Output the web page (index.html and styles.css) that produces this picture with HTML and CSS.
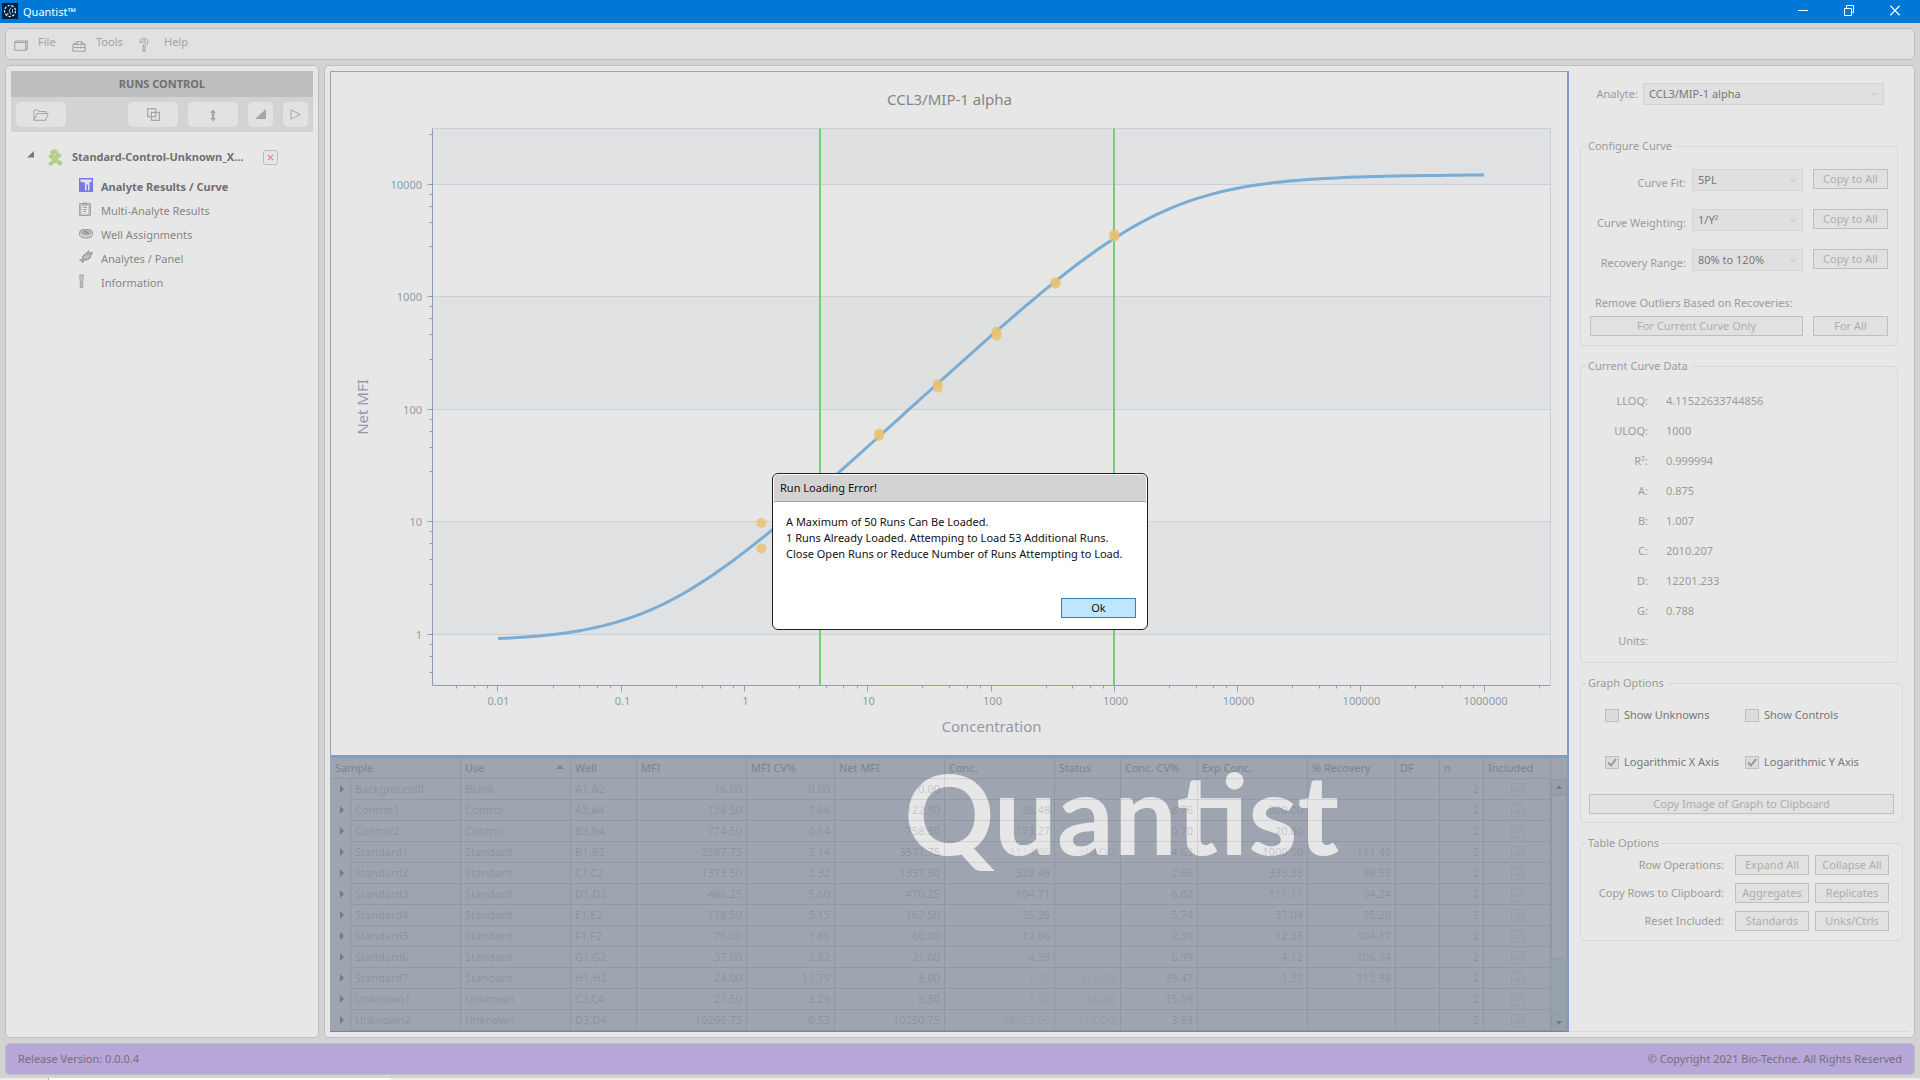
FILE: index.html
```html
<!DOCTYPE html>
<html lang="en">
<head>
<meta charset="utf-8">
<title>Quantist</title>
<link rel="stylesheet" href="styles.css">
</head>
<body>
<header class="titlebar">
  <svg class="app-icon" width="16" height="16" viewBox="0 0 16 16" aria-hidden="true">
    <rect width="16" height="16" fill="#04203f"/>
    <circle cx="8" cy="8" r="5.500" fill="none" stroke="#e8f4fa" stroke-width="1.200" stroke-dasharray="2.400 1.400"/>
    <path d="M9 4.500L7 8l2 3.500M10.500 6v4" fill="none" stroke="#7fc4e8" stroke-width="1"/>
    <circle cx="5.500" cy="11" r="1" fill="#8bc34a"/>
  </svg>
  <span class="app-name">Quantist™</span>
  <div class="window-buttons">
    <button type="button" aria-label="Minimize"><svg width="10" height="11" viewBox="0 0 10 11"><path d="M0 5.500h10" stroke="#fff"/></svg></button>
    <button type="button" aria-label="Restore"><svg width="10" height="11" viewBox="0 0 10 11"><path d="M.5 3.500h7v7h-7zM2.500 3.500v-3h7v7h-2" fill="none" stroke="#fff"/></svg></button>
    <button type="button" aria-label="Close"><svg width="10" height="11" viewBox="0 0 10 11"><path d="M.3.6l9.400 9.800M9.700.6L.3 10.400" stroke="#fff" stroke-width="1.200"/></svg></button>
  </div>
</header>

<div class="app">
  <nav class="menubar panel">
    <button type="button" class="menu-item">
      <svg width="14" height="14" viewBox="0 0 14 14"><path d="M.7 4.500v7.800h11V4.500zM.7 4.500l1-1.500h4.500M11.700 12.300l1.600-1V3l-1.600 1.500M6 3h7.300" fill="none" stroke="#a3a3a3" stroke-width="1.100"/></svg>
      <span>File</span>
    </button>
    <button type="button" class="menu-item">
      <svg width="14" height="14" viewBox="0 0 14 14"><path d="M1 6.500h12v6.700H1zM1 9.500h12M5 6.300V3.500h4.500v2.800M2.500 6V5h1.800M10 5h1.500v1M5.500 8.500v2M8.500 8.500v2" fill="none" stroke="#a3a3a3" stroke-width="1.100"/></svg>
      <span>Tools</span>
    </button>
    <button type="button" class="menu-item">
      <svg width="14" height="14" viewBox="0 0 14 14"><path d="M2 4.500C2 1.800 3.600.6 5.800.6s4 1.400 4 3.400c0 2.600-2.600 2.700-2.600 5.200H5c0-3.400 2.400-3.300 2.400-5 0-.8-.6-1.400-1.500-1.400S4.300 3.400 4.300 4.500zM5 11h2.200v2.300H5z" fill="none" stroke="#9c9c9c"/></svg>
      <span>Help</span>
    </button>
  </nav>

  <main class="workspace">
    <aside class="runs panel">
      <h2 class="runs-title">RUNS CONTROL</h2>
      <div class="runs-tools">
        <button type="button" class="tool open" aria-label="Open"><svg width="16" height="12" viewBox="0 0 16 12"><path d="M1 11.300V1h4l1 1.500h7v2M1 11.300l3-6.800h11.200l-2.700 6.800z" fill="none" stroke="#a6a6a6"/></svg></button>
        <button type="button" class="tool" aria-label="Copy"><svg width="13" height="13" viewBox="0 0 13 13"><path d="M.6.6h8v8h-8zM4.400 4.400h8v8h-8z" fill="none" stroke="#a6a6a6" stroke-width="1.200"/></svg></button>
        <button type="button" class="tool" aria-label="Sort"><svg width="8" height="16" viewBox="0 0 8 16"><path d="M4 2.500L7 6H5.200v5H7l-3 3.500L1 11h1.800V6H1z" fill="#a6a6a6"/></svg></button>
        <button type="button" class="tool small" aria-label="Collapse"><svg width="11" height="11" viewBox="0 0 11 11"><path d="M11 0v10H0z" fill="#a6a6a6"/></svg></button>
        <button type="button" class="tool small" aria-label="Expand"><svg width="11" height="12" viewBox="0 0 11 12"><path d="M1 .8l9.300 4.700L1 10.200z" fill="none" stroke="#a6a6a6"/></svg></button>
      </div>
      <div class="tree">
        <div class="run">
          <svg class="caret" width="7" height="7" viewBox="0 0 7 7"><path d="M7 0v6.500H0z" fill="#777"/></svg>
          <svg class="run-icon" width="15" height="17" viewBox="0 0 15 17"><path d="M2.500 2.500Q5-.8 8.500.8q2.400 1 1.600 3.200 3 .4 3.600 3-1.400 2-3.600 1.800l.4 2.400q3.900.4 4.100 3-.6 2.800-3.800 2.200L8.600 14l-3 .2Q4.800 17 2.200 17 0 16 .8 13.500q1-1 2.600-1l.4-2.500Q.8 9.400.4 7.400q.4-2 3-1.800Q2 4.500 2.500 2.500z" fill="#b3cf85"/><path d="M5 3h1M8 3h1M5.500 5.500h2.500M6 8.500l1 2" stroke="#dfe6d2"/></svg>
          <span class="run-name">Standard-Control-Unknown_X...</span>
          <button type="button" class="run-close" aria-label="Close run"><svg width="7" height="7" viewBox="0 0 7 7"><path d="M.8.8l5.400 5.400M6.200.8L.8 6.200" stroke="#e57f7f" stroke-width="1.100"/></svg></button>
        </div>
        <ul class="views">
          <li class="current"><svg width="14" height="14" viewBox="0 0 14 14"><path d="M0 0h14v14H0z" fill="#7a78e4"/><path d="M1.500 1.500h11V4h-2v8.500H9V6.500H7.500v6H6V4.500H4V4H1.500z" fill="#e2e2f2"/></svg><a href="#results">Analyte Results / Curve</a></li>
          <li><svg width="14" height="14" viewBox="0 0 14 14"><rect x=".7" y="1.500" width="10.600" height="12" rx="1" fill="#c9cccf" stroke="#9aa0a3" stroke-width="1.200"/><path d="M3 4h6v7.500H3z" fill="#e9e9e9"/><path d="M4 1h4v2H4zM4 5.500h4M4 7.500h4M4 9.500h3" fill="none" stroke="#9aa0a3"/></svg><a href="#multi">Multi-Analyte Results</a></li>
          <li><svg width="14" height="14" viewBox="0 0 14 14"><path d="M.5 6.500q0-3 6.500-3t6.500 3V9q-1 3-6.500 3T.5 9z" fill="#b4b8ba" stroke="#999"/><path d="M1 8q1.500 2.500 6 2.500T13 8" fill="none" stroke="#e5e5e5" stroke-width="1.200"/><path d="M4 6.500l3-1 3 2M6 8l3-1" stroke="#7f8588" fill="none"/></svg><a href="#wells">Well Assignments</a></li>
          <li><svg width="14" height="14" viewBox="0 0 14 14"><path d="M.5 10l3-.5Q3 5.500 6 4l2-1 1.500-2.500 1 2.500 3-.5-1.500 3Q12 8 9 9.500L5 10.500 3.500 13l-.8-2z" fill="#a7adaf" stroke="#989ea0"/><path d="M5 8l3-3M7.500 8.500l2.500-3" stroke="#dfe2e3"/></svg><a href="#panel">Analytes / Panel</a></li>
          <li><svg width="14" height="14" viewBox="0 0 14 14"><path d="M.8 1h3.400l-.6 8.500H1.400zM1.200 11h2.600v2.300H1.200z" fill="#d0d3d5" stroke="#979da0"/></svg><a href="#info">Information</a></li>
        </ul>
      </div>
    </aside>

    <section class="content panel">
      <div class="results">
        <div class="chart">
          <svg id="chart" viewBox="0 0 1236 683" role="img" aria-label="Standard curve for CCL3/MIP-1 alpha"></svg>
        </div>
        <div class="grid">
          <div class="watermark">Quantist</div>
          <table>
            <colgroup>
              <col style="width:20px"><col style="width:110px"><col style="width:110px"><col style="width:66px"><col style="width:110px"><col style="width:88px"><col style="width:110px"><col style="width:110px"><col style="width:66px"><col style="width:77px"><col style="width:110px"><col style="width:88px"><col style="width:44px"><col style="width:44px"><col style="width:67px">
            </colgroup>
            <thead>
              <tr><th colspan="2">Sample</th><th class="sorted">Use</th><th>Well</th><th>MFI</th><th>MFI CV%</th><th>Net MFI</th><th>Conc.</th><th>Status</th><th>Conc. CV%</th><th>Exp Conc.</th><th>% Recovery</th><th>DF</th><th>n</th><th>Included</th></tr>
            </thead>
            <tbody id="rows"></tbody>
          </table>
          <div class="scrollbar" aria-hidden="true"><span class="up"></span><span class="thumb"></span><span class="down"></span></div>
        </div>
      </div>

      <aside class="options">
        <div class="analyte">
          <label for="analyte">Analyte:</label>
          <select id="analyte"><option>CCL3/MIP-1 alpha</option></select>
        </div>

        <fieldset>
          <legend>Configure Curve</legend>
          <div class="configure">
            <div class="pair"><label for="fit">Curve Fit:</label><select id="fit"><option>5PL</option></select></div>
            <button type="button" class="btn">Copy to All</button>
            <div class="pair"><label for="weight">Curve Weighting:</label><select id="weight"><option>1/Y²</option></select></div>
            <button type="button" class="btn">Copy to All</button>
            <div class="pair"><label for="range">Recovery Range:</label><select id="range"><option>80% to 120%</option></select></div>
            <button type="button" class="btn">Copy to All</button>
          </div>
          <p class="outliers-title">Remove Outliers Based on Recoveries:</p>
          <div class="outliers">
            <button type="button" class="btn">For Current Curve Only</button>
            <button type="button" class="btn">For All</button>
          </div>
        </fieldset>

        <fieldset>
          <legend>Current Curve Data</legend>
          <dl class="curve-data">
            <dt>LLOQ:</dt><dd>4.11522633744856</dd>
            <dt>ULOQ:</dt><dd>1000</dd>
            <dt>R²:</dt><dd>0.999994</dd>
            <dt>A:</dt><dd>0.875</dd>
            <dt>B:</dt><dd>1.007</dd>
            <dt>C:</dt><dd>2010.207</dd>
            <dt>D:</dt><dd>12201.233</dd>
            <dt>G:</dt><dd>0.788</dd>
            <dt>Units:</dt><dd></dd>
          </dl>
        </fieldset>

        <fieldset class="wide">
          <legend>Graph Options</legend>
          <div class="checks">
            <label><input type="checkbox">Show Unknowns</label>
            <label><input type="checkbox">Show Controls</label>
            <label><input type="checkbox" checked>Logarithmic X Axis</label>
            <label><input type="checkbox" checked>Logarithmic Y Axis</label>
          </div>
          <div class="copy-graph"><button type="button" class="btn">Copy Image of Graph to Clipboard</button></div>
        </fieldset>

        <fieldset class="wide">
          <legend>Table Options</legend>
          <div class="table-options">
            <span>Row Operations:</span><button type="button" class="btn">Expand All</button><button type="button" class="btn">Collapse All</button>
            <span>Copy Rows to Clipboard:</span><button type="button" class="btn">Aggregates</button><button type="button" class="btn">Replicates</button>
            <span>Reset Included:</span><button type="button" class="btn">Standards</button><button type="button" class="btn">Unks/Ctrls</button>
          </div>
        </fieldset>
      </aside>
    </section>
  </main>

  <footer class="footer panel">
    <span>Release Version: 0.0.0.4</span>
    <span>© Copyright 2021 Bio-Techne. All Rights Reserved</span>
  </footer>
</div>
<div class="taskbar-edge"><span></span></div>

<div class="overlay">
  <div class="dialog" role="alertdialog" aria-labelledby="dlg-title" aria-describedby="dlg-text">
    <h1 id="dlg-title">Run Loading Error!</h1>
    <p id="dlg-text">A Maximum of 50 Runs Can Be Loaded.<br>1 Runs Already Loaded. Attemping to Load 53 Additional Runs.<br>Close Open Runs or Reduce Number of Runs Attempting to Load.</p>
    <button type="button" class="ok">Ok</button>
  </div>
</div>
<script src="app.js"></script>
</body>
</html>
```
FILE: styles.css
```css
* { box-sizing: border-box; }

body {
  margin: 0;
  min-height: 100vh;
  display: flex;
  flex-direction: column;
  background: #d3d3d3;
  color: #9b9b9b;
  font: 11px/16px "Noto Sans", "Open Sans", sans-serif;
}

button, select, input { font: inherit; color: inherit; margin: 0; }
button { padding: 0; border: 0; background: none; }
svg { display: block; }
h1, h2, p, ul, dl, dd { margin: 0; padding: 0; font-size: inherit; font-weight: inherit; }

.panel { border: 1px solid #bebebe; border-radius: 5px; background: #e7e7e7; }

/* Title bar */
.titlebar { display: flex; align-items: flex-start; height: 23px; padding: 3px 0 0 2px; background: #0078d7; color: #fff; }
.app-name { margin-left: 5px; line-height: 17px; }
.window-buttons { display: flex; margin-left: auto; padding-right: 2px; }
.window-buttons button { width: 46px; padding: 2px 18px 0; }

/* Frame */
.app { flex: 1; display: flex; flex-direction: column; gap: 5px; padding: 5px 5px 3px; }
.menubar { display: flex; height: 32px; padding: 0 8px; background: #e1e1e1; }
.menu-item { display: flex; gap: 10px; width: 58px; padding: 5px 0 0; color: #a3a3a3; }
.menu-item + .menu-item { width: 66px; }
.menu-item + .menu-item + .menu-item { gap: 12px; }
.menu-item svg { margin-top: 4px; }
.workspace { flex: 1; display: flex; gap: 5px; }

/* Runs panel */
.runs { width: 314px; flex: none; padding: 5px; }
.runs-title { background: #bebebe; color: #707070; font-weight: 700; text-align: center; line-height: 26px; }
.runs-tools { display: flex; gap: 10px; padding: 5px; background: #d3d3d3; }
.tool { display: flex; align-items: center; justify-content: center; width: 50px; height: 25px; border-radius: 5px; background: #e2e2e2; }
.tool.small { width: 25px; }
.tool.open { margin-right: auto; }
.tree { padding: 15px 16px; }
.run { display: flex; align-items: center; height: 20px; color: #6f6f6f; font-weight: 700; }
.run-icon { margin: 0 9px 0 14px; }
.caret { align-self: flex-start; margin-top: 4px; }
.run-close { display: flex; align-items: center; justify-content: center; width: 15px; height: 15px; margin-left: 10px; border: 1px solid #bcbcbc; border-radius: 3px; }
.run-name { width: 181px; white-space: nowrap; }
.views { list-style: none; padding: 8px 0 0 52px; }
.views li { display: flex; gap: 8px; height: 24px; align-items: center; }
.views svg { margin-bottom: 4px; }
.views a { color: #868686; text-decoration: none; }
.views .current a { color: #6f6f6f; font-weight: 700; }

/* Content */
.content { flex: 1; min-width: 0; display: flex; padding: 5px; }
.results { flex: 1; min-width: 0; border-right: 2px solid #7b9dc7; display: flex; flex-direction: column; }
.chart { border: solid #94a5be; border-width: 1px 0 3px 1px; border-bottom-color: #7b9dc7; }
.chart svg { width: 100%; height: auto; }
.chart text { font-size: 11px; fill: #929aa8; }
.chart .axis-title { font-size: 15px; }
.chart .title { font-size: 15px; fill: #858585; }
.band { fill: #e0e1e3; }
.range { fill: rgba(215, 215, 180, .06); }
.gridline { stroke: #cbd0d8; }
.axis { stroke: #8d9bb8; fill: none; }
.curve { stroke: #79add5; stroke-width: 3; fill: none; }
.limit { stroke: #72cf76; stroke-width: 2; }
.point { fill: #e8c270; opacity: .8; }

/* Results table */
.grid { position: relative; flex: 1; display: flex; padding-left: 1px; background: #9ea5b1; border-bottom: 1px solid #7d848f; }
.watermark { position: absolute; top: 4px; left: 46%; padding-left: 5px; font: 700 112px/100px "Lato", sans-serif; color: #e7e7e7; }
table { position: relative; flex: 1; table-layout: fixed; width: 0; border-collapse: separate; border-spacing: 0; color: rgba(80, 85, 98, .24); }
th, td { height: 21px; padding: 0 4px; border: solid rgba(70, 76, 90, .14); border-width: 0 1px 1px 0; line-height: 16px; overflow: hidden; white-space: nowrap; }
th { font-weight: 400; text-align: left; color: #7c838f; }
.sorted::after { content: ""; float: right; margin: 5px 2px 0; border: 4px solid transparent; border-top: 0; border-bottom-color: #7c838f; }
.num { text-align: right; }
.faint { color: rgba(80, 85, 98, .14); }
.expander { border-bottom-color: transparent; }
.expander::before { content: ""; display: block; margin-left: 5px; width: 0; border: 4px solid transparent; border-left-color: #747b87; border-right: 0; }
.scrollbar { position: relative; width: 17px; margin-top: 21px; display: flex; flex-direction: column; background: #98a0ac; color: #78808c; }
.scrollbar span { border: 1px solid #929aa6; }
.up, .down { display: flex; align-items: center; justify-content: center; height: 16px; }
.up::after, .down::after { content: ""; border: 3px solid transparent; border-top: 0; border-bottom: 4px solid #747b87; }
.down { margin-top: auto; }
.down::after { border-bottom: 0; border-top: 4px solid #747b87; }
.thumb { height: 164px; background: #9ea5b1; }

/* Options */
.options { width: 340px; flex: none; padding: 12px 0 0 11px; border-bottom: 1px solid #dadada; }
select { appearance: none; height: 22px; padding: 0 5px; border: 1px solid #d3d3d3; border-radius: 0; color: #777; background: #e0e0e0 url("data:image/svg+xml,%3Csvg xmlns='http://www.w3.org/2000/svg' width='7' height='5'%3E%3Cpath d='M1 1l2.500 2.500L6 1' fill='none' stroke='%23bbb'/%3E%3C/svg%3E") no-repeat right 5px top 8px; }
.btn { height: 20px; border: 1px solid #bfbfbf; background: #e1e1e1; color: #adadad; line-height: 18px; white-space: nowrap; }
.analyte { display: flex; gap: 5px; align-items: center; justify-content: flex-end; margin: 0 25px 33px 0; }
.analyte select { width: 241px; }
fieldset { margin: 0 11px 12px 0; padding: 0; border: 1px solid #d4d9da; border-radius: 4px; min-width: 0; }
fieldset.wide { margin-right: 6px; }
legend { margin-left: 5px; padding: 0 3px 0 2px; }
.configure { display: grid; grid-template-columns: 1fr 75px; gap: 18px 10px; padding: 15px 9px 0; }
.pair { display: flex; gap: 6px; justify-content: flex-end; white-space: nowrap; }
.pair label { padding-top: 6px; }
.pair select { width: 111px; flex: none; }
.outliers-title { padding: 24px 14px 5px; }
.outliers { display: grid; grid-template-columns: 1fr 75px; gap: 10px; padding: 0 9px 9px; }
.curve-data { display: grid; grid-template-columns: 67px 1fr; column-gap: 18px; padding: 12px 0 6px; line-height: 30px; }
.curve-data dt { text-align: right; }
.curve-data dd { min-height: 30px; }
.checks { display: grid; grid-template-columns: 140px 1fr; row-gap: 31px; padding: 16px 0 24px 24px; color: #777; }
.checks label { display: flex; align-items: center; gap: 5px; }
input[type="checkbox"] { appearance: none; width: 14px; height: 13px; border: 1px solid #bfbfbf; background: #dcdcdc; }
input[type="checkbox"]:checked { background: #dcdcdc url("data:image/svg+xml,%3Csvg xmlns='http://www.w3.org/2000/svg' width='12' height='11'%3E%3Cpath d='M2 5.500l3 3L10 2' fill='none' stroke='%23999' stroke-width='2'/%3E%3C/svg%3E") no-repeat center; }
.tick input[type="checkbox"]:checked { display: block; width: 13px; margin: 0 auto; border-color: #5f6672; opacity: .12; background: url("data:image/svg+xml,%3Csvg xmlns='http://www.w3.org/2000/svg' width='11' height='11'%3E%3Cpath d='M2 5.500l3 3L9.500 2' fill='none' stroke='%23404550'/%3E%3C/svg%3E") no-repeat center; }
.copy-graph { padding: 0 8px 8px; display: grid; }
.table-options { display: grid; grid-template-columns: 1fr 74px 74px; gap: 8px 6px; padding: 4px 13px 9px 8px; line-height: 20px; }
.table-options span { text-align: right; padding-right: 5px; white-space: nowrap; }

/* Footer */
.footer { display: flex; align-items: center; justify-content: space-between; height: 32px; padding: 0 12px; background: #b7a6d8; color: #747079; }
.taskbar-edge { height: 2px; padding-left: 48px; background: #ececec; }
.taskbar-edge span { display: block; width: 343px; height: 2px; border-left: 1px solid #aaa; background: #fff; }

/* Dialog */
.overlay { position: fixed; inset: 23px 0 0; display: flex; align-items: center; justify-content: center; }
.dialog { display: flex; flex-direction: column; width: 376px; padding: 1px; border: 1px solid #222; border-radius: 6px; background: #fff; color: #111; }
.dialog h1 { padding: 5px 6px; background: #d3d3d3; border-bottom: 1px solid #a3a3a3; border-radius: 4px 4px 0 0; }
.dialog p { padding: 12px 12px 36px; white-space: nowrap; }
.ok { align-self: flex-end; width: 75px; height: 20px; margin: 0 10px 10px; border: 1px solid #3c7fb1; background: #bee6fd; line-height: 18px; }
```
FILE: app.js
```js
// Chart geometry: log10 scales on both axes.
const plot = { left: 101.5, top: 56.5, right: 1219.5, bottom: 613.5 };
const px = v => 413.5 + 123.27 * Math.log10(v);
const py = v => 562.4 - 112.5 * Math.log10(v);
const snap = v => Math.floor(v) + 0.5;

const parts = [];
const line = (cls, x1, y1, x2, y2) => parts.push(`<line class="${cls}" x1="${x1}" y1="${y1}" x2="${x2}" y2="${y2}"/>`);
const rect = (cls, x1, y1, x2, y2) => parts.push(`<rect class="${cls}" x="${x1}" y="${y1}" width="${x2 - x1}" height="${y2 - y1}"/>`);
const text = (x, y, s, anchor, cls = '', extra = '') => parts.push(`<text class="${cls}" x="${x}" y="${y}" text-anchor="${anchor}" ${extra}>${s}</text>`);

rect('band', plot.left, plot.top, plot.right, py(10000));
rect('band', plot.left, py(1000), plot.right, py(100));
rect('band', plot.left, py(10), plot.right, py(1));
rect('range', px(4.115), plot.top, px(1000), plot.bottom);
line('gridline', plot.left, plot.top, plot.right, plot.top);
line('gridline', plot.right, plot.top, plot.right, plot.bottom);

for (let e = -1; e <= 4; e++) {
  const v = 10 ** e;
  if (e >= 0) {
    const y = snap(py(v));
    line('gridline', plot.left, y, plot.right, y);
    line('axis', plot.left - 5, y, plot.left, y);
    text(91, y + 4, v, 'end');
  }
  for (const m of [2.8, 4.6, 6.4, 8.2]) {
    const y = snap(py(v * m));
    if (y > plot.top && y < plot.bottom) line('axis', plot.left - 3, y, plot.left, y);
  }
}
for (let e = -3; e <= 6; e++) {
  const v = 10 ** e;
  if (e >= -2) {
    const x = snap(px(v));
    line('axis', x, plot.bottom, x, plot.bottom + 6);
    text(x + 1, 633, String(Number(v.toFixed(2))), 'middle');
  }
  for (const m of [2.8, 4.6, 6.4, 8.2]) {
    const x = snap(px(v * m));
    if (x > plot.left && x < plot.right) line('axis', x, plot.bottom, x, plot.bottom + 3);
  }
}
line('axis', plot.left, plot.top, plot.left, plot.bottom);
line('axis', plot.left, plot.bottom, plot.right, plot.bottom);
line('limit', 489, plot.top, 489, plot.bottom);
line('limit', 783, plot.top, 783, plot.bottom);

// Five-parameter logistic fit
const fit = { A: 0.875, B: 1.007, C: 2010.207, D: 12201.233, G: 0.788 };
const curve = [];
for (let l = -2; l <= 6.0001; l += 0.05) {
  const x = 10 ** l;
  const y = fit.D + (fit.A - fit.D) / (1 + (x / fit.C) ** fit.B) ** fit.G;
  curve.push(`${px(x).toFixed(1)},${py(y).toFixed(1)}`);
}
parts.push(`<polyline class="curve" points="${curve.join(' ')}"/>`);

const points = [[1.37, 9.8], [1.37, 5.8], [12.35, 61], [12.35, 58], [37.04, 167], [37.04, 156], [111.11, 492], [111.11, 452], [333.33, 1350], [333.33, 1310], [1000, 3600], [1000, 3420]];
for (const [x, y] of points) parts.push(`<circle class="point" cx="${px(x)}" cy="${py(y)}" r="5"/>`);

text(618.5, 33, 'CCL3/MIP-1 alpha', 'middle', 'title');
text(660.5, 660, 'Concentration', 'middle', 'axis-title');
text(0, 0, 'Net MFI', 'middle', 'axis-title', 'transform="translate(37 335) rotate(-90)"');
document.getElementById('chart').innerHTML = parts.join('');

// Table rows: sample, use, well, MFI, MFI CV, net MFI, conc, status, conc CV, expected, recovery
const data = [
  ['Background0', 'Blank', 'A1,A2', '16.00', '0.00', '0.00', '', '', '', '', ''],
  ['Control1', 'Control', 'A3,A4', '138.50', '7.66', '122.50', '26.48', '', '8.76', '300.00', ''],
  ['Control2', 'Control', 'B3,B4', '774.50', '0.64', '758.50', '173.27', '', '0.70', '20.00', ''],
  ['Standard1', 'Standard', 'B1,B2', '3587.75', '3.14', '3571.75', '1114.86', '&gt;ULOQ', '4.63', '1000.00', '111.49'],
  ['Standard2', 'Standard', 'C1,C2', '1373.50', '2.32', '1357.50', '328.49', '', '2.66', '333.33', '98.55'],
  ['Standard3', 'Standard', 'D1,D2', '486.25', '5.60', '470.25', '104.71', '', '6.02', '111.11', '94.24'],
  ['Standard4', 'Standard', 'E1,E2', '178.50', '5.15', '162.50', '35.26', '', '5.74', '37.04', '95.20'],
  ['Standard5', 'Standard', 'F1,F2', '76.00', '1.86', '60.00', '12.86', '', '2.39', '12.35', '104.17'],
  ['Standard6', 'Standard', 'G1,G2', '37.00', '3.82', '21.00', '4.39', '', '6.99', '4.12', '106.74'],
  ['Standard7', 'Standard', 'H1,H2', '24.00', '11.79', '8.00', '1.56', '&lt;LLOQ', '39.47', '1.37', '113.98'],
  ['Unknown1', 'Unknown', 'C3,C4', '21.50', '3.29', '5.50', '1.02', '&lt;LLOQ', '15.19', '', ''],
  ['Unknown2', 'Unknown', 'D3,D4', '10266.75', '0.53', '10250.75', '18352.66', '&gt;ULOQ', '3.93', '', '']
];
document.getElementById('rows').innerHTML = data.map(row => {
  const cells = row.map((value, i) => {
    const faint = row[7] && (i === 6 || i === 7) ? ' faint' : '';
    return `<td class="${i > 2 ? 'num' : ''}${faint}">${value}</td>`;
  }).join('');
  return `<tr><td class="expander"></td>${cells}<td></td><td class="num">2</td><td class="tick"><input type="checkbox" checked aria-label="Include ${row[0]}"></td></tr>`;
}).join('');
```
